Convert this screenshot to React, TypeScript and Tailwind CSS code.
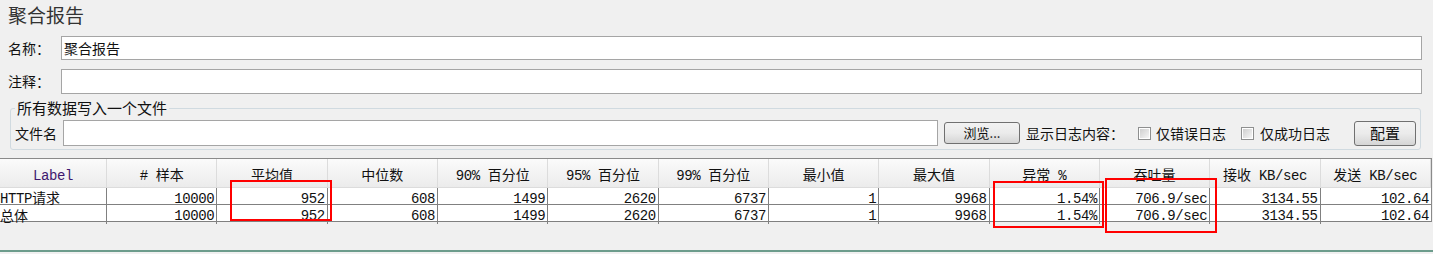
import React from "react";

const CJK_RE = /([\u3000-\u9fff\uff00-\uffef]+)/;

// renders latin runs in a mono face and CJK runs in a wider CJK face
const Mixed: React.FC<{ text: string; latin?: string; cjk?: string }> = ({
  text,
  latin = "text-[14px] tracking-[-0.4px]",
  cjk = "text-[14px]",
}) => (
  <>
    {text
      .split(CJK_RE)
      .filter(Boolean)
      .map((part, i) =>
        CJK_RE.test(part) ? (
          <span key={i} className={`${cjk} leading-[16px] font-['Noto_Sans_CJK_SC',sans-serif]`}>
            {part}
          </span>
        ) : (
          <span
            key={i}
            className={`${latin} leading-[16px] font-['Liberation_Mono','Noto_Sans_CJK_SC',monospace] whitespace-pre`}
          >
            {part}
          </span>
        )
      )}
  </>
);

const headers = [
  "Label",
  "# 样本",
  "平均值",
  "中位数",
  "90% 百分位",
  "95% 百分位",
  "99% 百分位",
  "最小值",
  "最大值",
  "异常 %",
  "吞吐量",
  "接收 KB/sec",
  "发送 KB/sec",
];

const rows = [
  ["HTTP请求", "10000", "952", "608", "1499", "2620", "6737", "1", "9968", "1.54%", "706.9/sec", "3134.55", "102.64"],
  ["总体", "10000", "952", "608", "1499", "2620", "6737", "1", "9968", "1.54%", "706.9/sec", "3134.55", "102.64"],
];

const gridCols = "grid grid-cols-[107px_repeat(12,110.33px)]";

const WinButton: React.FC<{ children: React.ReactNode; className?: string }> = ({
  children,
  className = "",
}) => (
  <button
    className={`flex shrink-0 items-center justify-center whitespace-nowrap rounded-[3px] border border-[#707070] bg-gradient-to-b from-[#f2f2f2] via-[#ebebeb] to-[#d5d5d5] text-[#111] ${className}`}
  >
    {children}
  </button>
);

const CheckBox = () => (
  <span className="flex h-[13px] w-[13px] shrink-0 items-center justify-center border border-[#8e8f8f] bg-white">
    <span className="h-[9px] w-[9px] bg-gradient-to-br from-[#cfcfcf] to-[#f6f6f6]" />
  </span>
);

export default function App() {
  return (
    <div className="relative h-[254px] w-[1433px] overflow-hidden bg-[#f0f0f0] font-['Noto_Sans_CJK_SC',sans-serif] text-[#111]">
      {/* title */}
      <div className="h-[36px] pl-[8px] text-[19px] leading-[30px] text-[#333]">聚合报告</div>

      {/* name + comment */}
      <div className="flex h-[24px] items-center pl-[8px] pr-[11px]">
        <span className="w-[53px] text-[14px]">名称：</span>
        <div className="flex h-full flex-1 items-center border border-[#a5a5a5] bg-white pl-[2px] text-[14px]">
          聚合报告
        </div>
      </div>
      <div className="mt-[9px] flex h-[25px] items-center pl-[8px] pr-[11px]">
        <span className="w-[53px] text-[14px]">注释：</span>
        <div className="h-full flex-1 border border-[#a5a5a5] bg-white" />
      </div>

      {/* file group */}
      <fieldset className="mx-[10px] mt-[6px] w-[1411px] rounded-[3px] border border-[#d0dae0] px-[4px] pb-[3px]">
        <legend className="px-[2px] text-[15px] leading-[16px]">所有数据写入一个文件</legend>
        <div className="mt-[4px] flex h-[26px] items-center whitespace-nowrap text-[14px]">
          <span className="w-[48px] shrink-0">文件名</span>
          <div className="h-full w-[875px] shrink-0 border border-[#a5a5a5] bg-white" />
          <WinButton className="ml-[6px] h-[22px] w-[76px] text-[13px]">浏览...</WinButton>
          <span className="ml-[6px] shrink-0">显示日志内容：</span>
          <span className="ml-[14px] shrink-0">
            <CheckBox />
          </span>
          <span className="ml-[5px] shrink-0">仅错误日志</span>
          <span className="ml-[15px] shrink-0">
            <CheckBox />
          </span>
          <span className="ml-[6px] shrink-0">仅成功日志</span>
          <WinButton className="ml-auto h-[25px] w-[62px] text-[15px]">配置</WinButton>
        </div>
      </fieldset>

      {/* results table */}
      <div className="relative mt-[8px] w-[1432px]">
        <div className="border-t border-r border-[#8a8a8a] bg-white">
          <div className={`${gridCols} h-[29px] bg-gradient-to-b from-[#fbfbfb] to-[#ebebeb]`}>
            {headers.map((h, i) => (
              <div
                key={h}
                className={`flex items-center justify-center border-r border-b border-[#dcdcdc] ${
                  i === 0 ? "text-[#40186e]" : "text-[#111]"
                }`}
              >
                <span>
                  <Mixed text={h} />
                </span>
              </div>
            ))}
          </div>
          {rows.map((r, ri) => (
            <div key={ri} className={`${gridCols} h-[17px] border-b border-[#808080]`}>
              {r.map((c, ci) => (
                <div
                  key={ci}
                  className={`flex items-center border-r border-[#808080] ${
                    ci === 0 ? "justify-start" : "justify-end pr-[2px]"
                  } ${ci === r.length - 1 ? "border-r-0" : ""}`}
                >
                  <span className="leading-[16px]">
                    <Mixed text={c} />
                  </span>
                </div>
              ))}
            </div>
          ))}
        </div>

        {/* highlight boxes */}
        <div className="absolute left-[230px] top-[22px] h-[41px] w-[102px] border-2 border-[#ff0000]" />
        <div className="absolute left-[993px] top-[23px] h-[47px] w-[111px] border-2 border-[#ff0000]" />
        <div className="absolute left-[1105px] top-[20px] h-[55px] w-[112px] border-2 border-[#ff0000]" />
      </div>

      {/* bottom edge */}
      <div className="absolute left-0 top-[250px] h-[2px] w-full bg-[#6c9c8c]" />
    </div>
  );
}
